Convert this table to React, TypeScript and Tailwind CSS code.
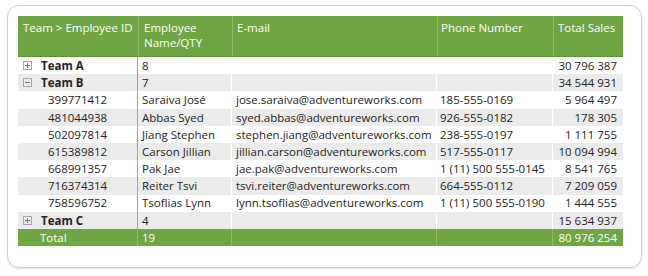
import React from 'react';

type Row = {
  kind: 'team' | 'emp' | 'total';
  id: string;
  name: string;
  email?: string;
  phone?: string;
  sales: string;
  open?: boolean;
};

const rows: Row[] = [
  { kind: 'team', id: 'Team A', name: '8', sales: '30 796 387', open: false },
  { kind: 'team', id: 'Team B', name: '7', sales: '34 544 931', open: true },
  { kind: 'emp', id: '399771412', name: 'Saraiva José', email: 'jose.saraiva@adventureworks.com', phone: '185-555-0169', sales: '5 964 497' },
  { kind: 'emp', id: '481044938', name: 'Abbas Syed', email: 'syed.abbas@adventureworks.com', phone: '926-555-0182', sales: '178 305' },
  { kind: 'emp', id: '502097814', name: 'Jiang Stephen', email: 'stephen.jiang@adventureworks.com', phone: '238-555-0197', sales: '1 111 755' },
  { kind: 'emp', id: '615389812', name: 'Carson Jillian', email: 'jillian.carson@adventureworks.com', phone: '517-555-0117', sales: '10 094 994' },
  { kind: 'emp', id: '668991357', name: 'Pak Jae', email: 'jae.pak@adventureworks.com', phone: '1 (11) 500 555-0145', sales: '8 541 765' },
  { kind: 'emp', id: '716374314', name: 'Reiter Tsvi', email: 'tsvi.reiter@adventureworks.com', phone: '664-555-0112', sales: '7 209 059' },
  { kind: 'emp', id: '758596752', name: 'Tsoflias Lynn', email: 'lynn.tsoflias@adventureworks.com', phone: '1 (11) 500 555-0190', sales: '1 444 555' },
  { kind: 'team', id: 'Team C', name: '4', sales: '15 634 937', open: false },
  { kind: 'total', id: 'Total', name: '19', sales: '80 976 254' },
];

const Toggle: React.FC<{ open?: boolean }> = ({ open }) => (
  <svg width="9" height="9" viewBox="0 0 9 9" className="shrink-0">
    <rect x="0.5" y="0.5" width="8" height="8" fill="none" stroke="#a6a6a6" />
    <line x1="2" y1="4.5" x2="7" y2="4.5" stroke="#7a7a7a" />
    {!open && <line x1="4.5" y1="2" x2="4.5" y2="7" stroke="#7a7a7a" />}
  </svg>
);

const App: React.FC = () => {
  return (
    <div className="w-[648px] h-[276px] bg-white p-[5px_6px_8px_7px] font-['Open_Sans',sans-serif] text-[11.5px] text-[#252423]">
      <div className="w-full h-full rounded-[12px] border border-[#cfcfcf] shadow-[0_1px_2px_rgba(0,0,0,0.12)] pt-[10px] pl-[10px]">
        <div className="w-[605px]">
          {/* header */}
          <div className="flex h-[41px] bg-[#70a544] text-white border-b border-[#5f933a] leading-[15px]">
            <div className="w-[120px] px-[5px] pt-[4px]">Team &gt; Employee ID</div>
            <div className="w-[94px] px-[5px] pt-[4px] border-l border-[#8dbb69]">Employee Name/QTY</div>
            <div className="w-[205px] px-[4px] pt-[4px] border-l border-[#8dbb69]">E-mail</div>
            <div className="w-[116px] px-[3px] pt-[4px] border-l border-[#8dbb69]">Phone Number</div>
            <div className="w-[70px] px-[4px] pt-[4px] border-l border-[#8dbb69]">Total Sales</div>
          </div>

          {rows.map((r, i) => {
            const bg =
              r.kind === 'total' ? 'bg-[#70a544] text-white' : i % 2 === 1 ? 'bg-[#ebebeb]' : 'bg-white';
            const sep = r.kind === 'total' ? 'border-[#8dbb69]' : 'border-white';
            return (
              <div key={r.id} className={`flex h-[17.2px] items-center whitespace-nowrap ${bg}`}>
                <div className="w-[120px] h-full flex items-center border-r border-[#8dbb69]">
                  {r.kind === 'team' && (
                    <div className="flex items-center pl-[5px] gap-[9px] font-bold">
                      <Toggle open={r.open} />
                      <span>{r.id}</span>
                    </div>
                  )}
                  {r.kind === 'emp' && <span className="pl-[30px]">{r.id}</span>}
                  {r.kind === 'total' && <span className="pl-[22px]">{r.id}</span>}
                </div>
                <div className="w-[93px] h-full flex items-center px-[4px]">{r.name}</div>
                <div className={`w-[205px] h-full flex items-center px-[4px] border-l ${sep}`}>{r.email}</div>
                <div className={`w-[116px] h-full flex items-center px-[3px] border-l ${sep}`}>{r.phone}</div>
                <div className={`w-[70px] h-full flex items-center justify-end pr-[5px] border-l ${sep}`}>{r.sales}</div>
              </div>
            );
          })}
        </div>
      </div>
    </div>
  );
};

export default App;
